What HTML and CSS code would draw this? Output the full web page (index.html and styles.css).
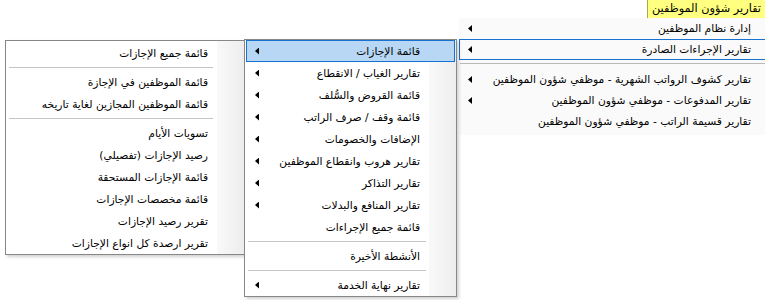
FILE: index.html
```html
<!DOCTYPE html>
<html lang="ar" dir="rtl">
<head>
    <meta charset="UTF-8">
    <meta name="viewport" content="width=device-width, initial-scale=1.0">
    <title>تقارير شؤون الموظفين</title>
    <link rel="stylesheet" href="styles.css">
</head>
<body>
    <!-- Ribbon tab -->
    <div class="tab">تقارير شؤون الموظفين</div>

    <!-- Level 1: tab dropdown -->
    <div class="menu menu-main">
        <div class="item"><span>إدارة نظام الموظفين</span><i class="arrow"></i></div>
        <div class="item focused"><span>تقارير الإجراءات الصادرة</span><i class="arrow"></i></div>
        <div class="sep"></div>
        <div class="item"><span>تقارير كشوف الرواتب الشهرية - موظفي شؤون الموظفين</span><i class="arrow"></i></div>
        <div class="item"><span>تقارير المدفوعات - موظفي شؤون الموظفين</span><i class="arrow"></i></div>
        <div class="item"><span>تقارير قسيمة الراتب - موظفي شؤون الموظفين</span></div>
    </div>

    <!-- Level 2: issued procedures -->
    <div class="menu menu-procs">
        <div class="item hot"><span>قائمة الإجازات</span><i class="arrow"></i></div>
        <div class="item"><span>تقارير الغياب / الانقطاع</span><i class="arrow"></i></div>
        <div class="item"><span>قائمة القروض والسُّلف</span><i class="arrow"></i></div>
        <div class="item"><span>قائمة وقف / صرف الراتب</span><i class="arrow"></i></div>
        <div class="item"><span>الإضافات والخصومات</span><i class="arrow"></i></div>
        <div class="item"><span>تقارير هروب وانقطاع الموظفين</span><i class="arrow"></i></div>
        <div class="item"><span>تقارير التذاكر</span><i class="arrow"></i></div>
        <div class="item"><span>تقارير المنافع والبدلات</span><i class="arrow"></i></div>
        <div class="item"><span>قائمة جميع الإجراءات</span></div>
        <div class="sep"></div>
        <div class="item"><span>الأنشطة الأخيرة</span></div>
        <div class="sep"></div>
        <div class="item"><span>تقارير نهاية الخدمة</span><i class="arrow"></i></div>
    </div>

    <!-- Level 3: leaves -->
    <div class="menu menu-leaves">
        <div class="item"><span>قائمة جميع الإجازات</span></div>
        <div class="sep"></div>
        <div class="item"><span>قائمة الموظفين في الإجازة</span></div>
        <div class="item"><span>قائمة الموظفين المجازين لغاية تاريخه</span></div>
        <div class="sep"></div>
        <div class="item"><span>تسويات الأيام</span></div>
        <div class="item"><span>رصيد الإجازات (تفصيلي)</span></div>
        <div class="item"><span>قائمة الإجازات المستحقة</span></div>
        <div class="item"><span>قائمة مخصصات الإجازات</span></div>
        <div class="item"><span>تقرير رصيد الإجازات</span></div>
        <div class="item"><span>تقرير ارصدة كل انواع الإجازات</span></div>
    </div>
</body>
</html>
```

FILE: styles.css
```css
html, body {
    margin: 0;
    height: 100%;
    overflow: hidden;
    background: #fff;
}

body {
    position: relative;
    font-family: "DejaVu Sans", sans-serif;
    font-size: 10.7px;
    color: #000;
}

.tab {
    position: absolute;
    top: 0;
    left: 647px;
    right: 0;
    height: 18px;
    line-height: 18px;
    padding-right: 4px;
    background: #ffff80;
    border-left: 1px solid #a9a94c;
    font-size: 11.3px;
    white-space: nowrap;
}

.menu {
    position: absolute;
    box-sizing: border-box;
}

.item {
    display: flex;
    align-items: center;
    justify-content: space-between;
    box-sizing: border-box;
    height: 22px;
    margin: 0 1px;
    padding: 0 35px 0 9px;
    white-space: nowrap;
}

.arrow {
    display: block;
    width: 4px;
    height: 7px;
    background: #000;
    clip-path: polygon(0 50%, 100% 0, 100% 100%);
}

.sep {
    height: 4px;
    padding-top: 3px;
    margin: 0 30px 0 3px;
}

.sep::before {
    content: "";
    display: block;
    height: 1px;
    background: #c4c4c4;
}

/* level 1 */
.menu-main {
    top: 18px;
    left: 459px;
    width: 328px;
    padding-bottom: 3px;
    background: #fafafa;
}

.menu-main .item {
    height: 21px;
    margin: 0;
    padding-left: 9px;
    padding-right: 36px;
}

.menu-main .sep {
    height: 6px;
    padding-top: 3px;
    margin: 0 0 0 1px;
}

.menu-main .sep::before {
    background: #b9b9b9;
}

.menu-main .focused {
    box-shadow: inset 0 0 0 1px #1673d1;
}

/* levels 2 and 3 */
.menu-procs,
.menu-leaves {
    border: 1px solid #878787;
    background: linear-gradient(to right, #fff calc(100% - 27px), #f9f9f9 calc(100% - 27px), #ededed 100%);
    box-shadow: 2px 2px 3px rgba(0, 0, 0, 0.18);
}

.menu-procs {
    top: 39px;
    left: 244px;
    width: 213px;
    z-index: 2;
}

.menu-procs .hot {
    background: #b7d7f4;
    box-shadow: inset 0 0 0 1px #1673d1;
}

.menu-leaves {
    top: 40px;
    left: 5px;
    width: 240px;
    padding-top: 1px;
    z-index: 1;
}

.menu-leaves .sep {
    margin-right: 31px;
}
```
